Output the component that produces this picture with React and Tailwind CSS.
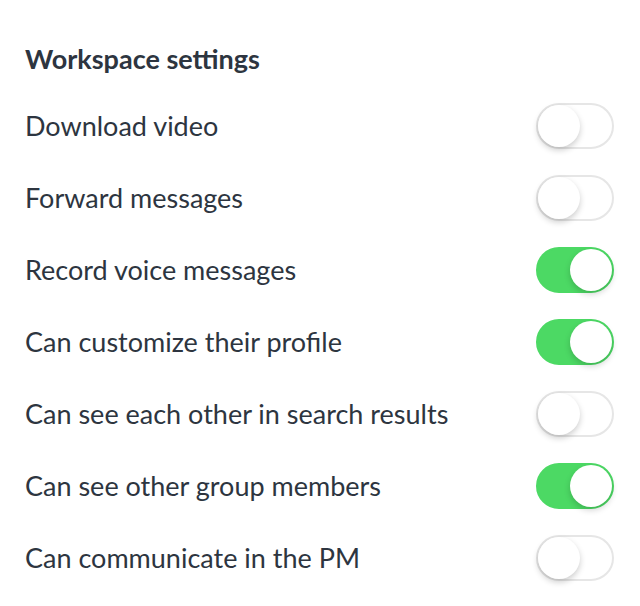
const settings = [
  { label: "Download video", on: false },
  { label: "Forward messages", on: false },
  { label: "Record voice messages", on: true },
  { label: "Can customize their profile", on: true },
  { label: "Can see each other in search results", on: false },
  { label: "Can see other group members", on: true },
  { label: "Can communicate in the PM", on: false },
];

function Toggle({ on }) {
  return (
    <div
      className={
        on
          ? "relative w-[78px] h-[46px] rounded-full bg-[#4cd964] border-2 border-[#4cd964]"
          : "relative w-[78px] h-[46px] rounded-full bg-white border-2 border-[#e6e6e6]"
      }
    >
      <div
        className={
          on
            ? "absolute top-0 right-0 w-[42px] h-[42px] rounded-full bg-white shadow-[0_3px_6px_rgba(0,0,0,0.18)]"
            : "absolute top-0 left-0 w-[42px] h-[42px] rounded-full bg-white shadow-[0_3px_6px_rgba(0,0,0,0.2)]"
        }
      />
    </div>
  );
}

export default function App() {
  return (
    <div
      className="w-[640px] h-[606px] bg-white pt-[43px] pl-[25px] pr-[26px] text-[#2d3540]"
      style={{ fontFamily: "Lato, 'Noto Sans', sans-serif" }}
    >
      <h2 className="text-[27px] leading-[32px] font-bold mb-[15px]">Workspace settings</h2>
      <div className="flex flex-col">
        {settings.map((s) => (
          <div key={s.label} className="h-[72px] flex items-center justify-between">
            <span className="text-[27px]">{s.label}</span>
            <Toggle on={s.on} />
          </div>
        ))}
      </div>
    </div>
  );
}
